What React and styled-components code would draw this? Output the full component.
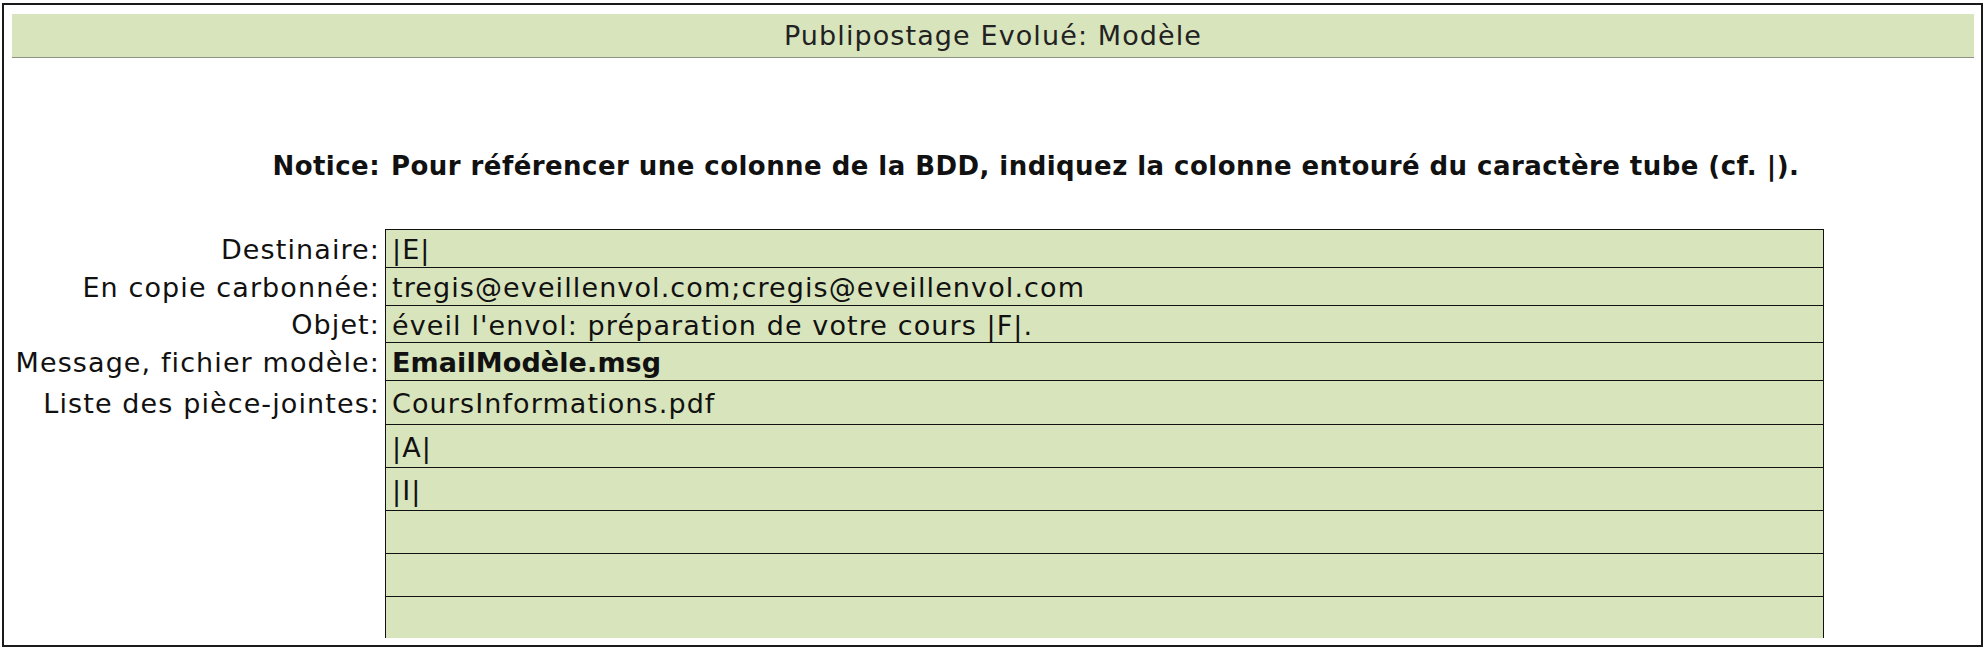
import React from "react"
import styled, { createGlobalStyle } from "styled-components"

// --- data ---
const fields = [
  { label: "Destinaire:", value: "|E|", height: 38 },
  { label: "En copie carbonnée:", value: "tregis@eveillenvol.com;cregis@eveillenvol.com", height: 38 },
  { label: "Objet:", value: "éveil l'envol: préparation de votre cours |F|.", height: 37 },
  { label: "Message, fichier modèle:", value: "EmailModèle.msg", height: 38, bold: true },
  { label: "Liste des pièce-jointes:", value: "CoursInformations.pdf", height: 44 },
  { label: "", value: "|A|", height: 43 },
  { label: "", value: "|I|", height: 43 },
  { label: "", value: "", height: 43 },
  { label: "", value: "", height: 43 },
  { label: "", value: "", height: 42 },
]

export default function App() {
  return (
    <>
      <GlobalStyle />
      <Frame>
        <TitleBar>Publipostage Evolué: Modèle</TitleBar>
        <NoticeRow>
          <Label $notice>Notice:</Label>
          <NoticeText>
            Pour référencer une colonne de la BDD, indiquez la colonne entouré du caractère tube (cf. |).
          </NoticeText>
        </NoticeRow>
        <Sheet>
          {fields.map((f, i) => (
            <Row key={i} $height={f.height}>
              <Label>{f.label}</Label>
              <Cell $bold={f.bold}>{f.value}</Cell>
            </Row>
          ))}
        </Sheet>
      </Frame>
    </>
  )
}

// --- styled components ---

const GlobalStyle = createGlobalStyle`
  body {
    margin: 0;
    background: #ffffff;
    font-family: "DejaVu Sans", "Liberation Sans", sans-serif;
    color: #111111;
  }
`

const Frame = styled.div`
  box-sizing: border-box;
  margin: 3px 0 0 2px;
  width: 1981px;
  height: 644px;
  border: 2px solid #1a1a1a;
  padding: 9px 7px 0 8px;
  overflow: hidden;
`

const TitleBar = styled.div`
  box-sizing: border-box;
  height: 44px;
  display: flex;
  align-items: center;
  justify-content: center;
  background: #d8e4bc;
  border-bottom: 1px solid #8e9284;
  font-size: 27px;
  letter-spacing: 1.1px;
  color: #222222;
`

const Row = styled.div`
  box-sizing: border-box;
  display: flex;
  height: ${p => p.$height}px;
`

const NoticeRow = styled(Row)`
  height: 38px;
  margin-top: 88px;
  margin-bottom: 45px;
`

const Label = styled.div`
  box-sizing: border-box;
  flex: 0 0 373px;
  padding: 2px 5px 0 0;
  display: flex;
  align-items: center;
  justify-content: flex-end;
  font-size: ${p => (p.$notice ? 26 : 27)}px;
  font-weight: ${p => (p.$notice ? 700 : 400)};
  letter-spacing: ${p => (p.$notice ? 0.45 : 1.1)}px;
  white-space: nowrap;
`

const NoticeText = styled.div`
  padding: 2px 0 0 6px;
  display: flex;
  align-items: center;
  font-size: 26px;
  font-weight: 700;
  letter-spacing: 0.45px;
  white-space: nowrap;
`

const Sheet = styled.div`
  display: flex;
  flex-direction: column;
`

const Cell = styled.div`
  box-sizing: border-box;
  flex: 0 0 1439px;
  display: flex;
  align-items: center;
  padding: 2px 0 0 6px;
  background: #d8e4bc;
  border-left: 1px solid #111111;
  border-right: 1px solid #111111;
  border-top: 1px solid #111111;
  font-size: 27px;
  font-weight: ${p => (p.$bold ? 700 : 400)};
  letter-spacing: ${p => (p.$bold ? 0.1 : 1.1)}px;
  white-space: nowrap;
`
